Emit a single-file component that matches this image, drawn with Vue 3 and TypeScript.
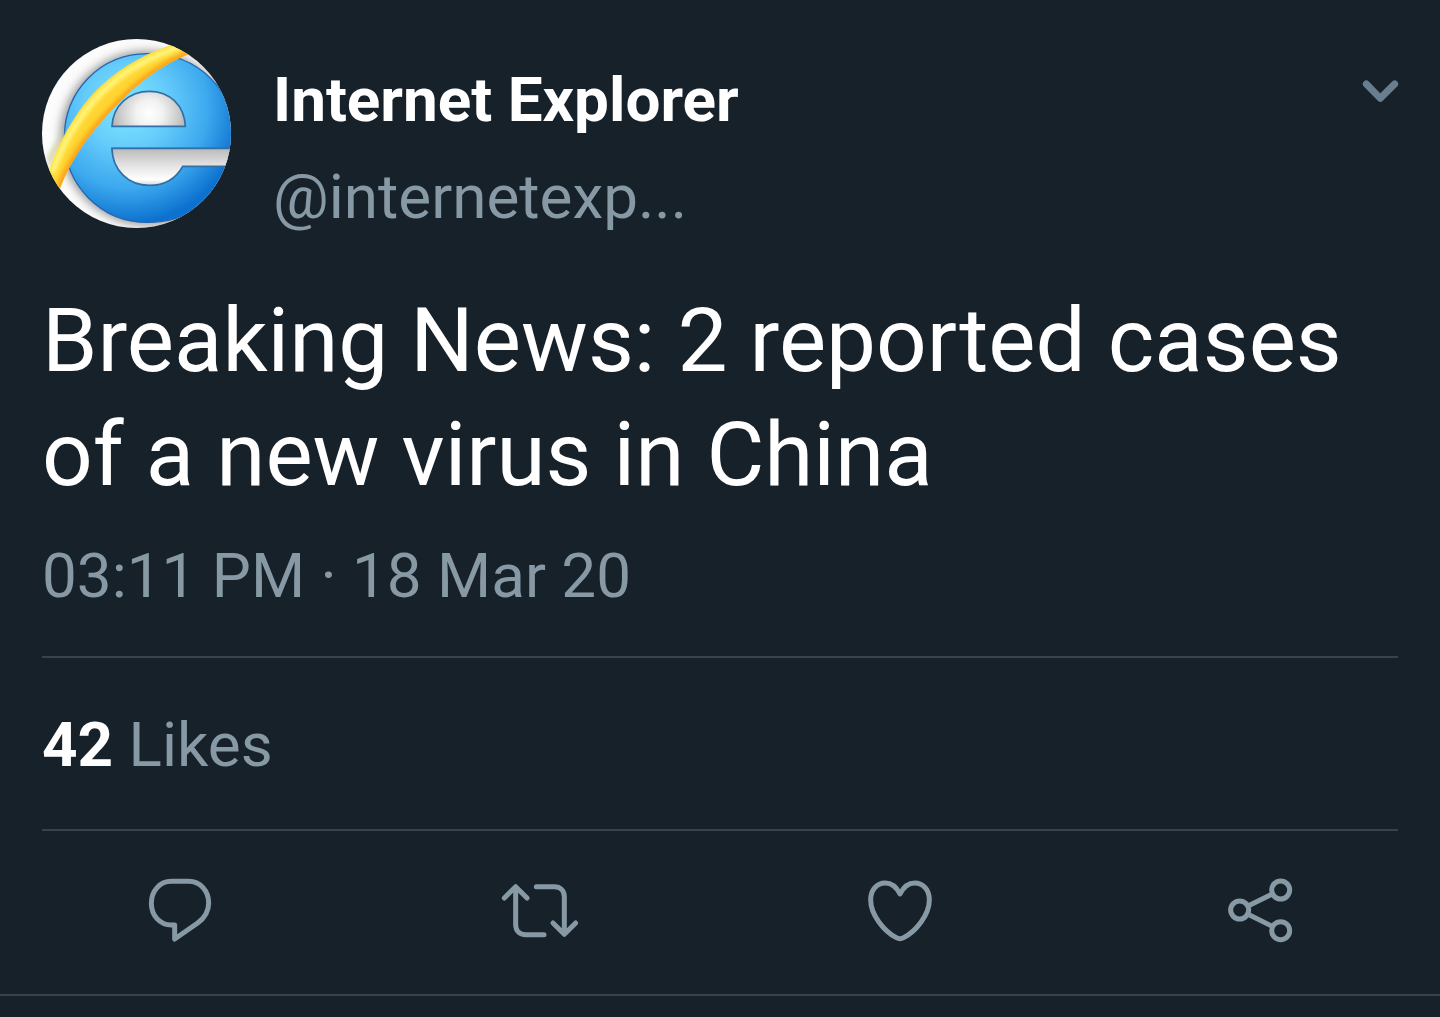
<script setup lang="ts">
interface Action {
  label: string
  width: number
  paths: string[]
  circles?: [number, number][]
}

const tweet = {
  name: 'Internet Explorer',
  handle: '@internetexp...',
  text: 'Breaking News: 2 reported cases of a new virus in China',
  time: '03:11 PM · 18 Mar 20',
  likes: 42,
}

const actions: Action[] = [
  {
    label: 'Reply',
    width: 80,
    paths: [
      'M94 34H146C181 34 206 63 206 99C206 126 193 145 172 160L104 207V165H94C59 165 34 136 34 100C34 62 60 34 94 34Z',
    ],
  },
  {
    label: 'Retweet',
    width: 90,
    paths: [
      'M28 84L62 50L96 84M62 52V164C62 182 74 194 92 194H147',
      'M124 50H178C196 50 208 62 208 80V190M174 159L208 193L242 159',
    ],
  },
  {
    label: 'Like',
    width: 80,
    paths: [
      'M120 72C109 50 95 39 76 39C49 39 32 61 32 89C32 135 72 183 109 203Q120 209 131 203C168 183 208 135 208 89C208 61 191 39 164 39C145 39 131 50 120 72Z',
    ],
  },
  {
    label: 'Share',
    width: 80,
    paths: ['M84 108L157 72M84 133L157 169'],
    circles: [
      [59, 120],
      [182, 60],
      [182, 182],
    ],
  },
]
</script>

<template>
  <main>
    <article class="tweet">
      <header class="head">
        <svg class="avatar" viewBox="36 27 567 567" role="img" aria-label="Internet Explorer logo">
          <defs>
            <clipPath id="disc"><circle cx="319.500" cy="310.500" r="283.500" /></clipPath>
            <clipPath id="band">
              <path d="M52 440C80 345 140 235 210 170C285 101 360 65 440 40L495 67C430 86 350 135 280 206C190 292 125 380 89 478Z" />
            </clipPath>
            <radialGradient id="blue" gradientUnits="userSpaceOnUse" cx="290" cy="230" r="350">
              <stop offset="0" stop-color="#80e6ff" />
              <stop offset="0.35" stop-color="#66cdfb" />
              <stop offset="0.7" stop-color="#3ca8ee" />
              <stop offset="1" stop-color="#0c71cf" />
            </radialGradient>
            <radialGradient id="topHole" gradientUnits="userSpaceOnUse" cx="358" cy="250" r="115">
              <stop offset="0" stop-color="#ffffff" />
              <stop offset="0.35" stop-color="#f2f2f2" />
              <stop offset="1" stop-color="#b4b4b4" />
            </radialGradient>
            <linearGradient id="lowHole" x1="0" y1="0" x2="0" y2="1">
              <stop offset="0" stop-color="#b9b9b9" />
              <stop offset="0.45" stop-color="#e2e2e2" />
              <stop offset="0.85" stop-color="#ffffff" />
              <stop offset="1" stop-color="#d5d5d5" />
            </linearGradient>
            <filter id="soft" x="-20%" y="-20%" width="140%" height="140%">
              <feGaussianBlur stdDeviation="15" />
            </filter>
            <filter id="sheen" x="-20%" y="-20%" width="140%" height="140%">
              <feGaussianBlur stdDeviation="6" />
            </filter>
          </defs>
          <g clip-path="url(#disc)">
            <rect x="36" y="27" width="567" height="567" fill="#fcfcfc" />
            <circle cx="352" cy="324" r="262" fill="#999" filter="url(#soft)" />
            <path
              d="M353 71C210 71 103 184 103 324C103 466 213 577 353 577C480 577 575 500 620 409H458C438 445 403 466 358 466C294 466 247 419 246 355H620C622 180 505 71 353 71Z"
              fill="url(#blue)" stroke="#2368b0" stroke-width="4"
            />
            <path d="M246 355H620V409H458C438 445 403 466 358 466C294 466 247 419 246 355Z" fill="url(#lowHole)" stroke="#3270a8" stroke-width="5" />
            <path d="M246 289C249 226 298 184 358 184C419 184 463 226 466 289Z" fill="url(#topHole)" stroke="#3270a8" stroke-width="5" />
            <path d="M50 385Q65 345 108 300L76 380L60 420Z" fill="#d2d3a4" opacity="0.8" filter="url(#sheen)" />
            <g clip-path="url(#band)">
              <rect x="36" y="27" width="480" height="460" fill="#ffd530" />
              <g fill="none" filter="url(#sheen)">
                <path d="M66 430C97 340 155 245 223 180C293 115 366 78 450 50" stroke="#fff77e" stroke-width="18" />
                <path d="M89 478C125 380 190 292 280 206C350 135 430 86 495 67" stroke="#fca41c" stroke-width="24" />
              </g>
            </g>
          </g>
        </svg>
        <div class="author">
          <h1 class="name">{{ tweet.name }}</h1>
          <a class="handle" href="#profile">{{ tweet.handle }}</a>
        </div>
        <button class="more" type="button" aria-label="More options">
          <svg width="60" height="50" viewBox="0 0 180 150" aria-hidden="true">
            <path d="M49 57L91 100L134 57" fill="none" stroke="#697f90" stroke-width="21" stroke-linecap="round" stroke-linejoin="round" />
          </svg>
        </button>
      </header>

      <p class="text">{{ tweet.text }}</p>
      <time class="time" datetime="2020-03-18T15:11">{{ tweet.time }}</time>
      <p class="stats"><strong>{{ tweet.likes }}</strong> Likes</p>
    </article>

    <div class="actions">
      <button v-for="a in actions" :key="a.label" type="button" :aria-label="a.label">
        <svg class="icon" :width="a.width" height="80" :viewBox="`0 0 ${a.width * 3} 240`" aria-hidden="true">
          <path v-for="d in a.paths" :key="d" :d="d" />
          <circle v-for="c in a.circles" :key="c.join()" :cx="c[0]" :cy="c[1]" r="27" />
        </svg>
      </button>
    </div>
  </main>
</template>

<style>
body {
  margin: 0;
  background: #17212a;
}
</style>

<style scoped>
main {
  font-family: Roboto, 'Liberation Sans', sans-serif;
  font-size: 62px;
  line-height: 74px;
  color: #8899a6;
}

.tweet {
  padding: 39px 42px 0;
}

.head {
  display: flex;
  align-items: flex-start;
}

.avatar {
  flex: none;
  width: 189px;
  height: 189px;
}

.author {
  flex: 1;
  min-width: 0;
  padding: 12px 0 0 42px;
  line-height: 97px;
}

.name {
  margin: 0;
  font-size: 62px;
  font-weight: 700;
  color: #fff;
}

.handle {
  display: block;
  color: inherit;
  text-decoration: none;
}

button {
  display: flex;
  align-items: center;
  justify-content: center;
  padding: 0;
  border: 0;
  background: none;
  cursor: pointer;
}

.more {
  margin: 26px -12px 0 0;
}

.text {
  margin: 39px 0 27px;
  font-size: 89px;
  line-height: 114px;
  color: #fff;
}

.time {
  display: block;
  padding-bottom: 43px;
  border-bottom: 2px solid #38444d;
}

.stats {
  margin: 0;
  padding: 50px 0 47px;
  border-bottom: 2px solid #38444d;
}

.stats strong {
  font-weight: 700;
  color: #fff;
}

.actions {
  display: grid;
  grid-template-columns: repeat(4, 1fr);
  padding: 39px 0 44px;
  border-bottom: 2px solid #38444d;
}

.icon {
  fill: none;
  stroke: #8899a6;
  stroke-width: 15px;
  stroke-linecap: round;
  stroke-linejoin: round;
}
</style>
